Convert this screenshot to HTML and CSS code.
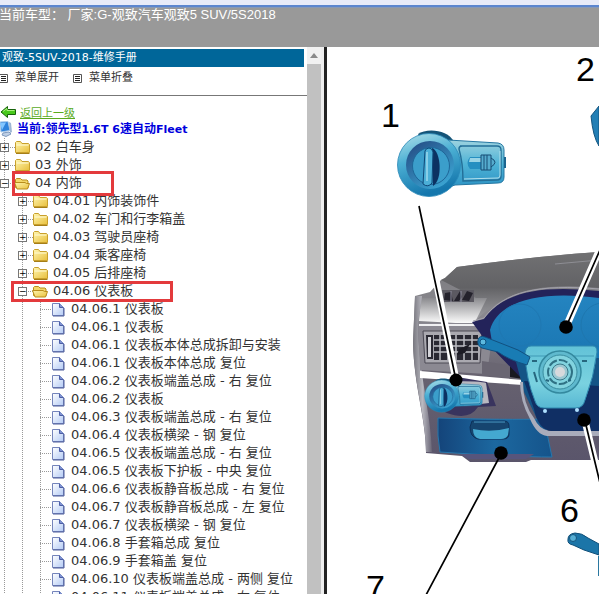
FILE: index.html
```html
<!DOCTYPE html>
<html lang="zh-CN">
<head>
<meta charset="utf-8">
<title>观致-5SUV-2018-维修手册</title>
<link rel="stylesheet" href="styles.css">
</head>
<body>
<svg width="0" height="0" class="defs" aria-hidden="true">
  <defs>
    <linearGradient id="gold" x1="0" y1="0" x2="1" y2="1"><stop offset="0" stop-color="#fff6b0"/><stop offset="1" stop-color="#e8bf3c"/></linearGradient>
    <linearGradient id="paper" x1="0" y1="0" x2="1" y2="1"><stop offset="0" stop-color="#fff"/><stop offset="1" stop-color="#b4cbf5"/></linearGradient>
    <symbol id="folder" viewBox="0 0 16 16"><path d="M1.5 13.5V3.5l1-1h4l1.500 2h6.500l1 1v8z" fill="url(#gold)" stroke="#c9a02c"/><path d="M2.500 6h12" stroke="#fffbd8"/><path d="M2 14.500h13.500" stroke="#a57e18"/></symbol>
    <symbol id="open" viewBox="0 0 16 16"><path d="M1.500 12.500V4.500l1-1h4l1.500 1.500h5l1 1v7z" fill="#f3d768" stroke="#b98d1c"/><path d="M.5 7.500h10.500l1.500 1h3l-2 5.500H3z" fill="url(#gold)" stroke="#b98d1c"/></symbol>
    <symbol id="page" viewBox="0 0 16 16"><path d="M2.500 2.500h7l4 4v8h-11z" fill="url(#paper)" stroke="#7484bb"/><path d="M9.500 2.500v4h4" fill="#7f93d2" stroke="#4c5ea6"/><path d="M3 15h11V7" fill="none" stroke="#4f5f9c"/></symbol>
    <symbol id="menu" viewBox="0 0 9 9"><path d="M.5.5h8v8h-8z" fill="#fff" stroke="#555"/><path d="M2 2.500h5M2 4.500h5M2 6.500h5" stroke="#222"/></symbol>
  </defs>
</svg>

<header class="banner">
  <h1>当前车型： 厂家:G-观致汽车观致5 SUV/5S2018</h1>
</header>

<div class="frames">
  <nav class="sidebar">
    <div class="contents">
      <h2>观致-5SUV-2018-维修手册</h2>
      <div class="tools">
        <button type="button"><svg><use href="#menu"/></svg>菜单展开</button>
        <button type="button"><svg><use href="#menu"/></svg>菜单折叠</button>
      </div>
      <div class="tree">
        <div class="back">
          <svg viewBox="0 0 16 14"><path d="M1 7l6.500-5.500v3H15.500v5h-8v3z" fill="#49c91c" stroke="#17620b"/><path d="M3 6.500l4-3v2h7.500" fill="none" stroke="#a9f27c"/></svg>
          <a href="#">返回上一级</a>
        </div>
        <div class="current">
          <svg viewBox="0 0 13 16"><path d="M0 1l8-.5 2 9L1 11z" fill="#2f83dc" stroke="#a9c8e8"/><path d="M0 2l6-.5L2 9z" fill="#83c6ff"/><path d="M9 1l2 1 1 9-2 1z" fill="#9fb7d4"/><path d="M3 12l6-1 2 2-5 2.500L2 14z" fill="#bfd0e6" stroke="#7f9abd"/></svg>
          <strong><span class="zh">当前</span>:<span class="zh">领先型</span>1.6T 6<span class="zh">速自动</span>Fleet</strong>
        </div>
        <ul>
          <li><div class="row"><button type="button" class="toggle">+</button><a href="#"><svg><use href="#folder"/></svg>02 白车身</a></div></li>
          <li><div class="row"><button type="button" class="toggle">+</button><a href="#"><svg><use href="#folder"/></svg>03 外饰</a></div></li>
          <li><div class="row boxed interior"><button type="button" class="toggle">−</button><a href="#"><svg><use href="#open"/></svg>04 内饰</a></div>
            <ul>
              <li><div class="row"><button type="button" class="toggle">+</button><a href="#"><svg><use href="#folder"/></svg>04.01 内饰装饰件</a></div></li>
              <li><div class="row"><button type="button" class="toggle">+</button><a href="#"><svg><use href="#folder"/></svg>04.02 车门和行李箱盖</a></div></li>
              <li><div class="row"><button type="button" class="toggle">+</button><a href="#"><svg><use href="#folder"/></svg>04.03 驾驶员座椅</a></div></li>
              <li><div class="row"><button type="button" class="toggle">+</button><a href="#"><svg><use href="#folder"/></svg>04.04 乘客座椅</a></div></li>
              <li><div class="row"><button type="button" class="toggle">+</button><a href="#"><svg><use href="#folder"/></svg>04.05 后排座椅</a></div></li>
              <li><div class="row boxed panel"><button type="button" class="toggle">−</button><a href="#"><svg><use href="#open"/></svg>04.06 仪表板</a></div>
                <ul class="pages">
                  <li><div class="row"><a href="#"><svg><use href="#page"/></svg>04.06.1 仪表板</a></div></li>
                  <li><div class="row"><a href="#"><svg><use href="#page"/></svg>04.06.1 仪表板</a></div></li>
                  <li><div class="row"><a href="#"><svg><use href="#page"/></svg>04.06.1 仪表板本体总成拆卸与安装</a></div></li>
                  <li><div class="row"><a href="#"><svg><use href="#page"/></svg>04.06.1 仪表板本体总成 复位</a></div></li>
                  <li><div class="row"><a href="#"><svg><use href="#page"/></svg>04.06.2 仪表板端盖总成 - 右 复位</a></div></li>
                  <li><div class="row"><a href="#"><svg><use href="#page"/></svg>04.06.2 仪表板</a></div></li>
                  <li><div class="row"><a href="#"><svg><use href="#page"/></svg>04.06.3 仪表板端盖总成 - 右 复位</a></div></li>
                  <li><div class="row"><a href="#"><svg><use href="#page"/></svg>04.06.4 仪表板横梁 - 钢 复位</a></div></li>
                  <li><div class="row"><a href="#"><svg><use href="#page"/></svg>04.06.5 仪表板端盖总成 - 右 复位</a></div></li>
                  <li><div class="row"><a href="#"><svg><use href="#page"/></svg>04.06.5 仪表板下护板 - 中央 复位</a></div></li>
                  <li><div class="row"><a href="#"><svg><use href="#page"/></svg>04.06.6 仪表板静音板总成 - 右 复位</a></div></li>
                  <li><div class="row"><a href="#"><svg><use href="#page"/></svg>04.06.7 仪表板静音板总成 - 左 复位</a></div></li>
                  <li><div class="row"><a href="#"><svg><use href="#page"/></svg>04.06.7 仪表板横梁 - 钢 复位</a></div></li>
                  <li><div class="row"><a href="#"><svg><use href="#page"/></svg>04.06.8 手套箱总成 复位</a></div></li>
                  <li><div class="row"><a href="#"><svg><use href="#page"/></svg>04.06.9 手套箱盖 复位</a></div></li>
                  <li><div class="row"><a href="#"><svg><use href="#page"/></svg>04.06.10 仪表板端盖总成 - 两侧 复位</a></div></li>
                  <li><div class="row"><a href="#"><svg><use href="#page"/></svg>04.06.11 仪表板端盖总成 - 右 复位</a></div></li>
                </ul>
              </li>
            </ul>
          </li>
        </ul>
      </div>
    </div>
    <div class="scrollbar"><svg viewBox="0 0 14 17"><path d="M3 11l4-5 4 5z" fill="#8a8a8a"/></svg></div>
  </nav>

  <main class="figure">
    <svg viewBox="327 47 272 547" width="272" height="547">
      <defs>
        <linearGradient id="ring" x1="0" y1="0" x2="0.300" y2="1"><stop offset="0" stop-color="#b5e2ea"/><stop offset=".45" stop-color="#4cb0d4"/><stop offset="1" stop-color="#1577ad"/></linearGradient>
        <linearGradient id="plate" x1="0" y1="0" x2="0" y2="1"><stop offset="0" stop-color="#9ed3df"/><stop offset=".5" stop-color="#4eb3d6"/><stop offset="1" stop-color="#2c92c4"/></linearGradient>
        <linearGradient id="dial" x1="0" y1="0" x2=".7" y2="1"><stop offset="0" stop-color="#23467f"/><stop offset="1" stop-color="#3ba4d2"/></linearGradient>
        <linearGradient id="dash" x1="0" y1="0" x2="0" y2="1"><stop offset="0" stop-color="#77777a"/><stop offset=".3" stop-color="#8a898f"/><stop offset=".6" stop-color="#66616f"/><stop offset="1" stop-color="#5a556b"/></linearGradient>
        <linearGradient id="hood" x1="0" y1="0" x2="0" y2="1"><stop offset="0" stop-color="#717173"/><stop offset=".5" stop-color="#626265"/><stop offset="1" stop-color="#a3a3a8"/></linearGradient>
        <linearGradient id="shine" x1="0" y1="0" x2="0" y2="1"><stop offset="0" stop-color="#8a8a8e"/><stop offset="1" stop-color="#fff"/></linearGradient>
        <linearGradient id="side" x1="0" y1="0" x2="1" y2="0"><stop offset="0" stop-color="#77767e"/><stop offset=".5" stop-color="#b9b9c0"/><stop offset="1" stop-color="#686475"/></linearGradient>
        <linearGradient id="glass" x1="0" y1="0" x2="0" y2="1"><stop offset="0" stop-color="#2484c0"/><stop offset="1" stop-color="#1670ac"/></linearGradient>
        <linearGradient id="tray" x1="0" y1="0" x2="1" y2="0"><stop offset="0" stop-color="#14447a"/><stop offset=".5" stop-color="#1c68a0"/><stop offset="1" stop-color="#15548b"/></linearGradient>
        <linearGradient id="pad" x1="0" y1="0" x2="0" y2="1"><stop offset="0" stop-color="#62c2d7"/><stop offset=".6" stop-color="#7ad2e0"/><stop offset="1" stop-color="#57b7d2"/></linearGradient>
        <g id="switch">
          <path d="M418 134c8-6 30-5 36 8l-2 4-30-4z" fill="#155477"/>
          <path d="M448 140l50 3q6 1 6 7v27q0 6-6 6l-43 2-9 3z" fill="url(#plate)" stroke="#2577a2"/>
          <path d="M504 157h2v11h-2z" fill="#1c658f"/>
          <circle cx="429" cy="165" r="31.500" fill="url(#ring)" stroke="#2a88b7" stroke-width=".8"/>
          <circle cx="430" cy="165" r="24" fill="url(#dial)"/>
          <circle cx="431" cy="166" r="18.500" fill="#3b9ecb" stroke="#1f6799"/>
          <path d="M432 148c9 3 11 32 1 38z" fill="#0c3262"/>
          <path d="M425 151q1-3 4-3t4 4l-1 31q-4 5-9 1z" fill="#4cafd7" stroke="#0e4777"/>
          <path d="M427 152v29" stroke="#9cd9ec" stroke-width="1.500"/>
          <path d="M460 146h37q4 0 4 4v26q0 4-4 4l-34 1q0-18-4-32 0-3 3-3z" fill="none" stroke="#236f98" stroke-width="1.400"/>
          <path d="M464 179l34-1q2 0 2-3v-24" fill="none" stroke="#b2e0ec"/>
          <path d="M470 157h16v12h-16q-5-6 0-12z" fill="#258fc1"/><path d="M470 158h15v4h-16z" fill="#99d4e6"/>
          <path d="M481 155h10v15h-10zM491 158q8 4 0 9" fill="#56acce" stroke="#164d74"/><path d="M484 155v15M487 155v15" stroke="#164d74"/>
        </g>
      </defs>

      <!-- dashboard shell -->
      <path d="M415 296l15-4 11-12 4-2 12-11q70-10 142-15v208h-68l-5 2h-56l-8-6-36-3c0-34-12-66-13-110z" fill="url(#dash)"/>
      <path d="M457 267q70-10 142-15v36q-60-6-92 10-20 10-34 25l5-24-37-19 4-2z" fill="url(#hood)"/>
      <path d="M555 264l44-4" stroke="#8e8e94"/>
      <path d="M421 298h66l-13 26-55-3z" fill="url(#shine)"/>
      <path d="M415 296h7l-4 28c0 45 13 90 14 128h-6c0-34-12-66-13-110z" fill="url(#side)"/>
      <path d="M442 290h32v12h-30z" fill="#5b5961"/>
      <path d="M444 300l1-7 6-1 2 9zM454 301l6-10 2 6-3 4zM462 300l5-9 6 2-4 8z" fill="#24222c"/>
      <path d="M451 291v11M461 291v11" stroke="#9190a0"/>
      <path d="M418 323h69l4 22-4 29-67-4z" fill="#8b8992"/>
      <path d="M419 325h70" stroke="#f0f0f2" stroke-width="2"/>
      <path d="M423 331h59l-2 32h-55z" fill="#aaa9b0" stroke="#4c4a55"/>
      <path d="M426 335h7v24h-6zM434 335h44v25h-44z" fill="#292832"/>
      <path d="M428 337h3v20h-3z" fill="#d4d4d9"/>
      <path d="M434 340h44M434 346h44M434 352h44M440 335v25M448 335v25M456 335v25M464 335v25M472 335v25" stroke="#bdbdc4" stroke-width="1.500"/>
      <path d="M459 349l11-5-5 9-8 2z" fill="#1c1b24"/>
      <path d="M482 361l40 6v13l-40-5z" fill="#6a6672"/>
      <path d="M510 365l13 2v12l-13-2z" fill="#191820"/>
      <path d="M420 371l103 9v5l-103-7z" fill="#fff"/>

      <!-- instrument glass -->
      <path d="M472 322l12-3c20-27 55-34 115-28v89h-76l-35-36z" fill="#23235a"/>
      <path d="M490 330c8-29 50-40 109-32v90h-74l-9-34-24-12z" fill="url(#glass)"/>
      <path d="M473 321l11-3c20-27 55-34 115-29" fill="none" stroke="#a4a3ac"/>
      <circle cx="520" cy="325" r="21" fill="none" stroke="#1f78b2"/>
      <circle cx="603" cy="325" r="22" fill="none" stroke="#1e77af"/>
      <path d="M516 362l10-4h73v48l-10 23-50-6-15-31z" fill="#145486"/>

      <!-- lower trim -->
      <path d="M438 418q70 2 106 1l8 38q-40 0-112-5-3-15-2-34z" fill="url(#tray)" stroke="#2577ad"/>
      <path d="M460 454h74l-8 5h-57z" fill="#57557c"/>
      <path d="M472 421h32q5 0 5 5v8q0 5-6 5h-25q-8-2-8-12z" fill="#16456f" stroke="#0d315a"/>
      <path d="M473 429q18 4 36-1l-1 7q-2 4-7 4h-21q-7-1-7-10z" fill="#44a8d0"/>
      <path d="M474 422h31" stroke="#4a9bc6"/>
      <path d="M435 383q-5 24 12 30 22 8 31-6l18-1-9-24-30-5z" fill="#39345e"/>
      <path d="M448 381q34 0 38 2l3 20-25 3z" fill="#b8b8c0"/>
      <use href="#switch" transform="translate(210 312) scale(.54 .51)"/>
      <path d="M523 382q0 22 11 36 5 11 15 13h50v5h-52q-10-1-17-17-10-18-10-37z" fill="#a9acbb"/>
      <path d="M524 381l10 28q4 20 17 22h48v-45z" fill="#102f64"/>

      <!-- steering column -->
      <path d="M531 346h62q4 0 4 6-3 25-12 48-2 8-9 8h-32q-7 0-9-7-9-22-10-48 1-7 6-7z" fill="url(#pad)" stroke="#2e88af"/>
      <path d="M528 356h66" stroke="#3f99b5"/>
      <circle cx="560" cy="372" r="21" fill="#5fb9ce" stroke="#34899f" stroke-width="1.500"/>
      <circle cx="560" cy="372" r="17" fill="#82d3df" stroke="#398c9f"/>
      <circle cx="560" cy="372" r="12" fill="none" stroke="#2f7184" stroke-width="2" stroke-dasharray="9 2"/>
      <circle cx="560" cy="372" r="8" fill="#9cc8d2" stroke="#39798a"/>
      <circle cx="560" cy="372" r="5" fill="#d7d9dc"/>
      <path d="M532 361h5M582 361h5M534 372l3 10M546 380l3 1M571 380l-3 1" stroke="#27677f" stroke-width="2"/>
      <circle cx="545" cy="411" r="2" fill="#afe0ff"/><circle cx="577" cy="410" r="2" fill="#afe0ff"/>
      <path d="M478 340q1-5 7-3l33 13 12 7-3 8q-18-5-29-13l-16-4q-5-2-4-8z" fill="#197cb4" stroke="#125180"/>
      <circle cx="483" cy="342" r="3" fill="#5cb9df" stroke="#0f5280"/>

      <!-- callout leaders -->
      <g fill="none">
        <path d="M430 250l26 130M599 251l-33 76M585 421l14 58" stroke="#fff" stroke-width="7"/>
        <path d="M419 206l37 174M600 250l-34 77M585 421l15 62M501 454l-75 141" stroke="#000" stroke-width="1.700"/>
      </g>
      <circle cx="456" cy="380" r="6.500"/><circle cx="566" cy="327" r="6.800"/><circle cx="584" cy="420" r="6.800"/><circle cx="501" cy="453" r="6.800"/>

      <!-- separate parts -->
      <use href="#switch"/>
      <path d="M599 106l-8 10q2 21 8 30z" fill="#237fb5" stroke="#15557f"/>
      <path d="M568 539q0-5 7-6 7 0 13 5l11 6v11l-15-5-11-5q-6-1-5-6z" fill="#1b75a8" stroke="#104f78"/>
      <circle cx="573" cy="538" r="3.500" fill="#56aed4" stroke="#14557e"/>
      <path d="M598 556h1v20h-1z" fill="#2b78a0"/>
      <g class="callouts"><text x="381" y="127">1</text><text x="576" y="81">2</text><text x="560" y="522">6</text><text x="366" y="599">7</text></g>
    </svg>
  </main>
</div>
</body>
</html>
```

FILE: styles.css
```css
*, ::after { box-sizing: border-box; }

body {
  display: flex;
  flex-direction: column;
  height: 100vh;
  margin: 0;
  overflow: hidden;
  background: #fff;
  color: #333;
  font-family: "DejaVu Sans", "Noto Sans CJK SC", sans-serif;
  font-size: 13px;
}

.defs { position: absolute; }

ul { margin: 0; padding: 0; list-style: none; }

button {
  padding: 0;
  border: 0;
  background: none;
  color: inherit;
  font: inherit;
}

.banner {
  flex: none;
  height: 47px;
  border-top: 5px solid #e8ebf8;
  background: linear-gradient(#5c86cf 0 2px, #8899b5 2px 3px, #999 3px);
  color: #fff;
}

.banner h1 {
  margin: 0;
  font: 13px/20px "Liberation Sans", "Noto Sans CJK SC", sans-serif;
  text-indent: -1px;
  white-space: pre;
}

.frames { display: flex; flex: 1; min-height: 0; }

.sidebar {
  display: flex;
  flex: none;
  width: 327px;
  border-right: 3px solid #222;
  overflow: hidden;
}

.contents { flex: 1; overflow: hidden; }

.contents h2 {
  margin: 2px 3px 0 0;
  padding-left: 2px;
  background: #069;
  color: #fff;
  font-size: 11px;
  font-weight: 400;
  line-height: 18px;
}

.tools {
  display: flex;
  gap: 14px;
  height: 29px;
  border-bottom: 1px solid #777;
  font-size: 11px;
  line-height: 22px;
}

.tools button { display: flex; align-items: center; gap: 7px; height: 22px; }
.tools svg { width: 9px; height: 9px; }
.tools button:first-child { margin-left: -1px; }

.tree { padding-top: 8px; }

.back, .current { display: flex; align-items: center; height: 16px; }
.back { gap: 4px; font-size: 11px; }
.back svg { width: 16px; height: 14px; }
.back a { color: #5aab1e; }

.current { gap: 4px; height: 18px; color: #00d; font-size: 11px; line-height: 16px; }
.current svg { width: 13px; height: 16px; }
.zh { font-size: 12px; }

.tree > ul { margin-left: -5px; }
.tree ul ul { padding-left: 18px; }

.tree li {
  background: repeating-linear-gradient(#999 0 1px, #fff 1px 2px) 9px 0 / 1px 100% no-repeat;
}

.row {
  display: flex;
  align-items: center;
  height: 18px;
  padding-left: 5px;
  background: repeating-linear-gradient(90deg, #999 0 1px, transparent 1px 2px) 9px 9px / 11px 1px no-repeat;
  line-height: 18px;
  white-space: nowrap;
}

.row a {
  display: flex;
  align-items: center;
  gap: 5px;
  color: #333;
  text-decoration: none;
}

.row svg { width: 16px; height: 16px; }

.toggle {
  width: 9px;
  height: 9px;
  margin-right: 5px;
  border: 1px solid #777;
  background: #fff;
  color: #000;
  font-size: 9px;
  line-height: 7px;
}

.pages .row { padding-left: 19px; }

.boxed { position: relative; }

.boxed::after {
  content: "";
  position: absolute;
  border: 3px solid #e33a3c;
  pointer-events: none;
}

.interior::after { top: -3px; left: 17px; width: 102px; height: 25px; }
.panel::after { top: -1px; left: -2px; width: 162px; height: 21px; }

.scrollbar {
  flex: none;
  width: 17px;
  border-right: 3px solid #eee;
  background: linear-gradient(#f1f1f1 0 17px, #c1c1c1 17px);
}

.scrollbar svg { display: block; width: 14px; height: 17px; }

.figure { flex: 1; min-width: 0; overflow: hidden; }
.figure svg { display: block; }

.callouts { font: 34px "Liberation Sans", sans-serif; fill: #000; }
```
